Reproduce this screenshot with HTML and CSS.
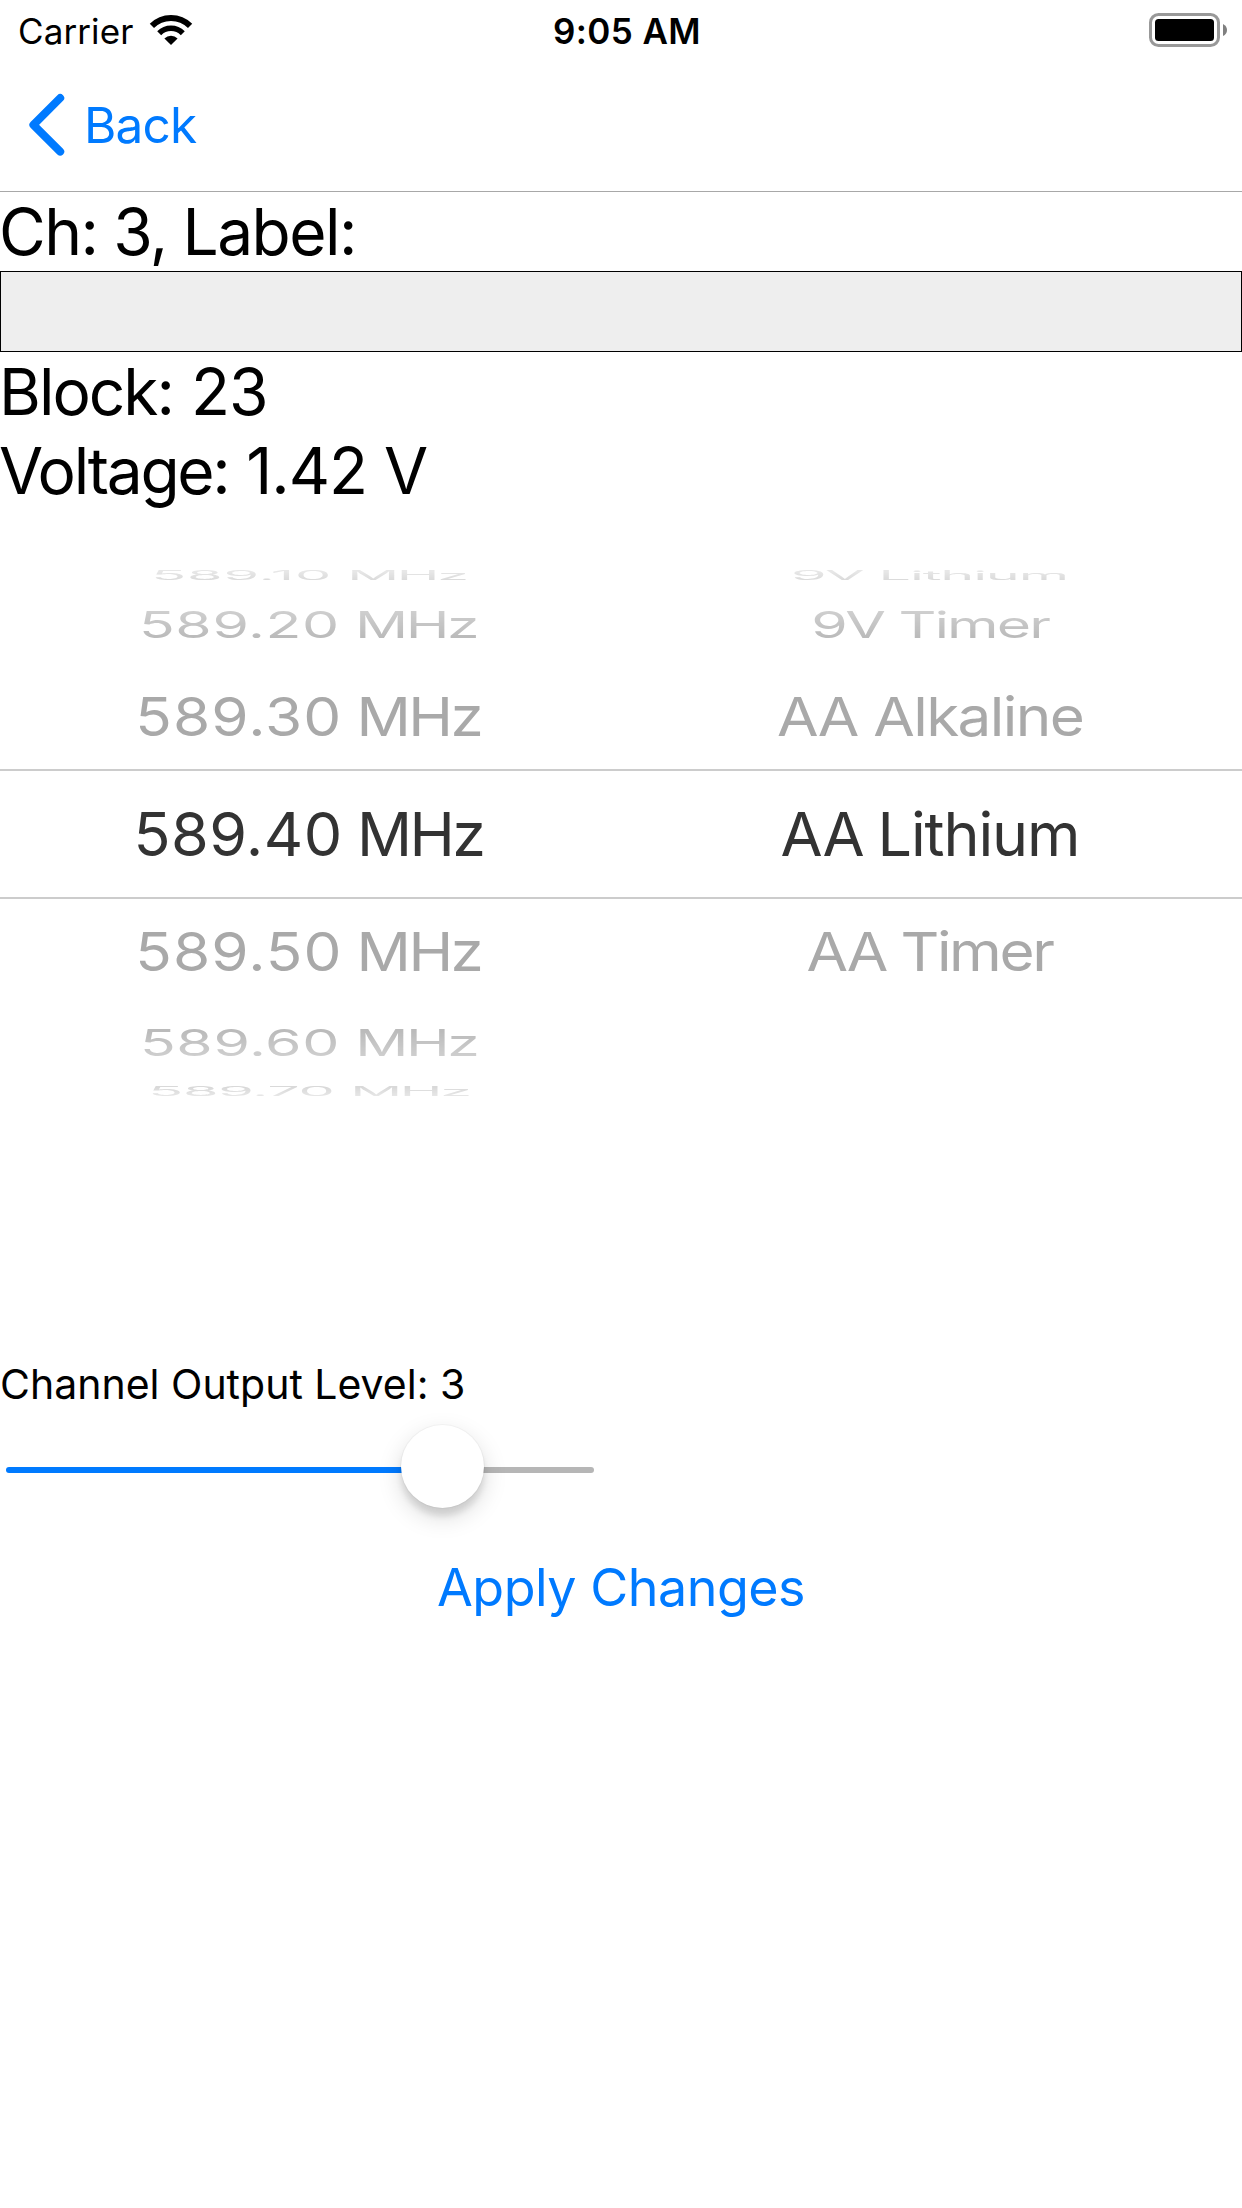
FILE: index.html
```
<!DOCTYPE html>
<html lang="en">
<head>
<meta charset="utf-8">
<title>Channel 3</title>
<link rel="stylesheet" href="styles.css">
</head>
<body>
<header class="status-bar">
  <div class="status-left">
    <span class="carrier">Carrier</span>
    <svg class="wifi" width="44" height="32" viewBox="149 14 44 32" aria-label="Wi-Fi">
      <path d="M151.9 25.9A27 27 0 0 1 190.1 25.9" fill="none" stroke="#000" stroke-width="6"/>
      <path d="M159.2 33.2A16.7 16.7 0 0 1 182.8 33.2" fill="none" stroke="#000" stroke-width="5.6"/>
      <path d="M171 45L164.4 38.6A9.3 9.3 0 0 1 177.6 38.6Z"/>
    </svg>
  </div>
  <span class="clock">9:05 AM</span>
  <div class="status-right">
    <svg width="80" height="36" viewBox="1148 12 80 36" aria-label="Battery">
      <rect x="1150.5" y="14.5" width="68" height="31" rx="8" fill="none" stroke="#999" stroke-width="3"/>
      <rect x="1155" y="19" width="59" height="22" rx="3.5"/>
      <path d="M1223 24Q1227 26 1227 30T1223 36Z" fill="#808080"/>
    </svg>
  </div>
</header>
<nav class="nav-bar">
  <a class="back">
    <svg width="37" height="63" viewBox="28 93 37 63" aria-hidden="true">
      <path d="M60.2 98L33.4 124.8L60.2 151.6" fill="none" stroke="#007aff" stroke-width="8" stroke-linecap="round" stroke-linejoin="round"/>
    </svg>
    <span class="back-text">Back</span>
  </a>
</nav>
<main>
  <div class="line label-line">Ch: 3, Label:</div>
  <input class="label-input" type="text" aria-label="Label">
  <div class="line block-line">Block: <span class="value">23</span></div>
  <div class="line voltage-line">Voltage: <span class="value">1.42 V</span></div>

  <section class="picker">
    <div class="row far far-top"><span class="freq">589.10 <span class="unit">MHz</span></span><span class="w-9v-lithium">9V Lithium</span></div>
    <div class="row mid mid-top"><span class="freq">589.20 <span class="unit">MHz</span></span><span class="w-9v-timer">9V Timer</span></div>
    <div class="row near near-top"><span class="freq">589.30 <span class="unit">MHz</span></span><span class="w-alkaline">AA Alkaline</span></div>
    <div class="row selected"><span class="freq">589.40 <span class="unit">MHz</span></span><span class="w-lithium">AA Lithium</span></div>
    <div class="row near near-bottom"><span class="freq">589.50 <span class="unit">MHz</span></span><span class="w-timer">AA Timer</span></div>
    <div class="row mid mid-bottom"><span class="freq">589.60 <span class="unit">MHz</span></span><span></span></div>
    <div class="row far far-bottom"><span class="freq">589.70 <span class="unit">MHz</span></span><span></span></div>
  </section>

  <div class="level-label">Channel Output Level: 3</div>
  <div class="slider">
    <div class="slider-fill"></div>
    <div class="slider-thumb"></div>
    <div class="slider-rest"></div>
  </div>
  <button class="apply" type="button">Apply Changes</button>
</main>
</body>
</html>
```
FILE: styles.css
```
* {
  box-sizing: border-box;
}

body {
  margin: 0;
  min-height: 2208px;
  background: #fff;
  color: #000;
  font-family: Inter, "Liberation Sans", sans-serif;
  white-space: nowrap;
}

svg {
  display: block;
}

/* Status bar */
.status-bar {
  display: grid;
  grid-template-columns: 553px 149px 1fr;
  height: 60px;
  font-size: 35px;
  line-height: 62px;
}

.status-left {
  display: flex;
  align-items: flex-start;
  padding-left: 18px;
}

.carrier {
  width: 131px;
  letter-spacing: 0.1px;
}

.wifi {
  margin-top: 14px;
}

.clock {
  font-weight: 600;
  letter-spacing: 0.4px;
}

.status-right {
  display: flex;
  justify-content: flex-end;
  padding: 12px 14px 0 0;
}

/* Navigation bar */
.nav-bar {
  height: 132px;
  border-bottom: 1px solid #a8a8a8;
}

.back {
  display: flex;
  align-items: center;
  gap: 19px;
  height: 129px;
  padding-left: 28px;
  color: #007aff;
  font-size: 49.5px;
  letter-spacing: -0.85px;
}

/* Channel details */
.line {
  height: 79px;
  font-size: 64px;
  line-height: 79px;
  text-indent: -1px;
}

.label-line {
  letter-spacing: -1.5px;
  word-spacing: -0.8px;
}

.block-line {
  letter-spacing: -2px;
}

.voltage-line {
  letter-spacing: -2.3px;
}

.value {
  margin-left: 2px;
  letter-spacing: -1px;
}

.label-input {
  display: block;
  width: 100%;
  height: 81px;
  border: 1px solid #000;
  border-radius: 0;
  background: #eee;
  font: inherit;
  font-size: 64px;
}

/* Picker wheel */
.picker {
  height: 648px;
  padding-top: 57px;
  font-size: 61px;
}

.row {
  display: grid;
  grid-template-columns: 1fr 1fr;
  align-items: center;
  justify-items: center;
}

.row > span {
  line-height: 74px;
  margin: -37px 3px -37px 0;
}

.selected {
  height: 130px;
  border-top: 2px solid #ccc;
  border-bottom: 2px solid #ccc;
  color: #333;
}

.near {
  height: 104px;
  color: #a9a9a9;
}

.mid {
  height: 80px;
  color: #bababa;
}

.far {
  height: 18px;
  color: #d0d0d0;
}

.selected .freq {
  letter-spacing: 0.4px;
  word-spacing: -3px;
}

.near .freq {
  letter-spacing: 1.1px;
  word-spacing: -4px;
}

.mid .freq {
  letter-spacing: 0.6px;
  word-spacing: -2px;
}

.far-top .freq {
  letter-spacing: 0.8px;
  word-spacing: -2px;
}

.far-bottom .freq {
  letter-spacing: -0.5px;
}

.row .unit {
  margin-right: 1px;
  letter-spacing: -2.6px;
}

.near > span {
  transform: scale(0.987, 0.886);
}

.near-bottom > span {
  transform: translateY(0.7px) scale(0.987, 0.886);
}

.mid > span {
  transform: scale(0.966, 0.594);
}

.far > span {
  transform: scale(0.945, 0.204);
}

.mid-top > span {
  mask-image: linear-gradient(rgba(0, 0, 0, 0.7) 20%, #000 80%);
}

.mid-bottom > span {
  mask-image: linear-gradient(#000 20%, rgba(0, 0, 0, 0.7) 80%);
}

.far-top > span {
  mask-image: linear-gradient(rgba(0, 0, 0, 0.5) 20%, rgba(0, 0, 0, 0.8) 80%);
}

.far-bottom > span {
  mask-image: linear-gradient(rgba(0, 0, 0, 0.8) 20%, rgba(0, 0, 0, 0.5) 80%);
}

.row .w-9v-lithium {
  letter-spacing: -1.3px;
}

.row .w-9v-timer {
  letter-spacing: -2px;
}

.row .w-alkaline {
  letter-spacing: -1.6px;
}

.row .w-lithium {
  letter-spacing: -1.1px;
  word-spacing: -2px;
}

.row .w-timer {
  letter-spacing: -2.4px;
}

/* Output level */
.level-label {
  margin-top: 196px;
  height: 60px;
  font-size: 41px;
  line-height: 60px;
}

.slider {
  display: flex;
  align-items: center;
  width: 600px;
  height: 84px;
  margin-top: 10px;
  padding: 0 6px;
}

.slider-fill,
.slider-rest {
  height: 6px;
  margin-top: 7px;
  border-radius: 3px;
}

.slider-fill {
  width: 435px;
  margin-right: -40px;
  background: #007aff;
}

.slider-rest {
  flex: 1;
  margin-left: -40px;
  background: #b6b6b6;
}

.slider-thumb {
  position: relative;
  z-index: 1;
  width: 83px;
  height: 83px;
  border-radius: 50%;
  background: #fff;
  box-shadow: 0 0 0 1px rgba(0, 0, 0, 0.03), 0 9px 24px rgba(0, 0, 0, 0.15), 0 8px 6px rgba(0, 0, 0, 0.1);
}

.apply {
  display: block;
  margin: 42px auto 0;
  padding: 0;
  border: 0;
  background: none;
  color: #007aff;
  font: 400 52px/76px Inter, "Liberation Sans", sans-serif;
  letter-spacing: -0.5px;
}
```
